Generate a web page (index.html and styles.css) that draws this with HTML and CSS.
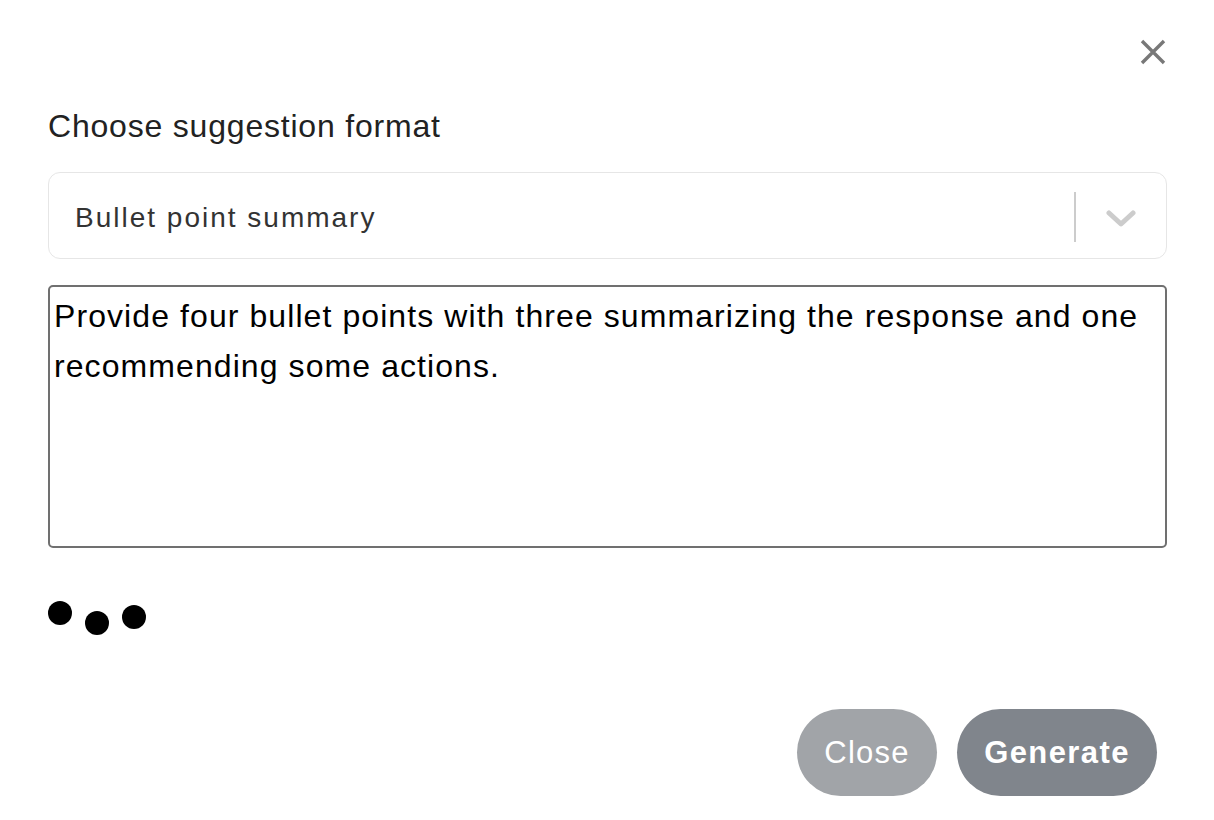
FILE: index.html
```html
<!DOCTYPE html>
<html>
<head>
<meta charset="utf-8">
<link rel="stylesheet" href="styles.css">
</head>
<body>
<div class="dialog">
  <div class="top">
    <button class="x" aria-label="Close">
      <svg width="26" height="26" viewBox="0 0 26 26"><path d="M2 2 L24 24 M24 2 L2 24" stroke="#787878" stroke-width="3.4" stroke-linecap="butt"/></svg>
    </button>
  </div>
  <div class="label">Choose suggestion format</div>
  <div class="select">
    <span class="value">Bullet point summary</span>
    <div class="indicators">
      <span class="sep"></span>
      <svg class="chev" width="30" height="18" viewBox="0 0 30 18"><path d="M3 3 L15 14 L27 3" fill="none" stroke="#cccccc" stroke-width="5" stroke-linejoin="round" stroke-linecap="round"/></svg>
    </div>
  </div>
  <div class="textarea">Provide four bullet points with three summarizing the response and one recommending some actions.</div>
  <div class="dots">
    <span class="dot d1"></span>
    <span class="dot d2"></span>
    <span class="dot d3"></span>
  </div>
  <div class="actions">
    <button class="btn close">Close</button>
    <button class="btn gen">Generate</button>
  </div>
</div>
</body>
</html>
```
FILE: styles.css
```css
* { box-sizing: border-box; }
html, body { margin: 0; padding: 0; background: #fff; }
body { font-family: "Liberation Sans", Arial, sans-serif; }
.dialog {
  width: 1214px;
  height: 820px;
  padding: 38px 47px 0 48px;
  display: flex;
  flex-direction: column;
}
.top { display: flex; justify-content: flex-end; height: 28px; }
.x {
  border: 0; background: none; padding: 0; margin-right: 1px;
  width: 26px; height: 28px; display: flex; align-items: center; justify-content: center;
}
.label {
  margin-top: 40px;
  font-size: 32px;
  line-height: 40px;
  letter-spacing: 0.8px;
  color: #222;
}
.select {
  margin-top: 26px;
  height: 87px;
  border: 1.5px solid #e6e6e6;
  border-radius: 12px;
  display: flex;
  align-items: center;
  padding-left: 26px;
  padding-top: 5px;
}
.value { flex: 1; font-size: 28px; color: #333; letter-spacing: 2px; }
.indicators { display: flex; align-items: center; height: 100%; }
.sep { width: 2px; height: 50px; background: #cccccc; margin-top: -2px; }
.chev { margin: 2px 30px 0 30px; }
.textarea {
  margin-top: 26px;
  height: 263px;
  border: 2px solid #707070;
  border-radius: 5px;
  padding: 4px 3px 4px 4px;
  font-size: 32px;
  line-height: 50px;
  letter-spacing: 1.08px;
  color: #000;
}
.dots { position: relative; height: 60px; margin-top: 53px; }
.dot { position: absolute; width: 24px; height: 24px; border-radius: 50%; background: #000; }
.d1 { left: 0; top: 0; }
.d2 { left: 37px; top: 10px; }
.d3 { left: 74px; top: 4px; }
.actions {
  margin-top: 48px;
  display: flex;
  justify-content: flex-end;
  gap: 20px;
  padding-right: 10px;
}
.btn {
  border: 0;
  height: 87px;
  border-radius: 44px;
  color: #fff;
  font-family: "Liberation Sans", Arial, sans-serif;
  font-size: 31px;
  letter-spacing: 1.2px;
  padding: 0;
}
.close { width: 140px; background: #a1a4a8; }
.gen { width: 200px; background: #80858c; font-weight: bold; letter-spacing: 1.4px; }
```
